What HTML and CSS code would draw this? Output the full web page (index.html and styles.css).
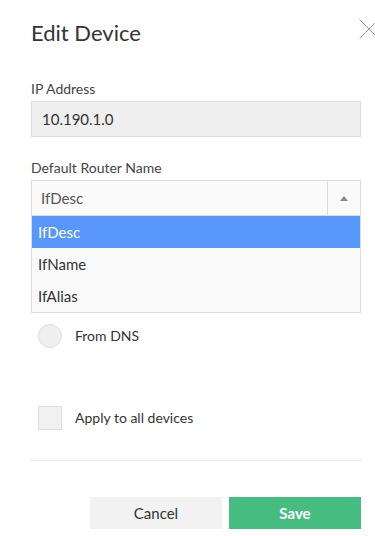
FILE: index.html
```html
<!DOCTYPE html>
<html lang="en">
<head>
  <meta name="viewport" content="width=device-width, initial-scale=1.0" />
  <title>Edit Device</title>
  <link rel="stylesheet" href="styles.css">
</head>
<body>

  <div class="modal">
    <h1 class="modal-title">Edit Device</h1>
    <span class="close-btn">
      <svg width="20" height="20" viewBox="0 0 20 20">
        <path d="M0.5 0.5 L19.5 19.5 M19.5 0.5 L0.5 19.5" stroke="#9a9a9a" stroke-width="1" fill="none" />
      </svg>
    </span>

    <div class="field first">
      <label>IP Address</label>
      <div class="input">10.190.1.0</div>
    </div>

    <div class="field">
      <label>Default Router Name</label>
      <div class="select">
        <span class="select-value">IfDesc</span>
        <span class="select-arrow"></span>
      </div>
      <ul class="dropdown">
        <li class="active">IfDesc</li>
        <li>IfName</li>
        <li>IfAlias</li>
      </ul>
    </div>

    <div class="option radio-row">
      <span class="radio"></span>
      <span>From DNS</span>
    </div>

    <div class="option check-row">
      <span class="checkbox"></span>
      <span>Apply to all devices</span>
    </div>

    <hr class="divider">

    <div class="actions">
      <button class="btn cancel">Cancel</button>
      <button class="btn save">Save</button>
    </div>
  </div>

</body>
</html>
```

FILE: styles.css
```css
body {
  margin: 0;
  font-family: Lato, "Open Sans", sans-serif;
  background: white;
  color: #333;
}

.modal {
  position: relative;
  width: 330px;
  padding: 20px 0 0 31px;
}

.modal-title {
  margin: 0;
  font-size: 22px;
  line-height: 26px;
  font-weight: normal;
  color: #333;
}

.close-btn {
  position: absolute;
  top: 19px;
  left: 359px;
  width: 20px;
  height: 20px;
  cursor: pointer;
}

.close-btn svg { display: block; }

.field {
  position: relative;
  margin-top: 22px;
}

.field.first { margin-top: 34px; }

.field label {
  display: block;
  font-size: 14px;
  line-height: 18px;
  margin-bottom: 3px;
  color: #444;
}

.input {
  height: 36px;
  box-sizing: border-box;
  border: 1px solid #dcdcdc;
  background: #efefef;
  padding: 0 10px;
  font-size: 15px;
  line-height: 34px;
  color: #333;
}

.select {
  display: flex;
  height: 36px;
  box-sizing: border-box;
  border: 1px solid #dcdcdc;
  background: #fafafa;
  font-size: 15px;
  line-height: 34px;
  color: #555;
}

.select-value {
  flex: 1;
  padding-left: 9px;
}

.select-arrow {
  width: 32px;
  border-left: 1px solid #dcdcdc;
  display: flex;
  align-items: center;
  justify-content: center;
}

.select-arrow::after {
  content: "";
  border-left: 4px solid transparent;
  border-right: 4px solid transparent;
  border-bottom: 5px solid #888;
}

.dropdown {
  position: absolute;
  left: 0;
  right: 0;
  top: 100%;
  margin: 0;
  padding: 0;
  list-style: none;
  background: #fafafa;
  border: 1px solid #dcdcdc;
  border-top: none;
  z-index: 2;
}

.dropdown li {
  height: 32px;
  line-height: 32px;
  padding-left: 6px;
  font-size: 15px;
  color: #333;
}

.dropdown li.active {
  background: #5897fb;
  color: white;
}

.option {
  display: flex;
  align-items: center;
  gap: 13px;
  padding-left: 7px;
  font-size: 14px;
  line-height: 24px;
  color: #333;
}

.radio-row { margin-top: 108px; }
.check-row { margin-top: 58px; }

.radio {
  width: 24px;
  height: 24px;
  box-sizing: border-box;
  border-radius: 50%;
  border: 1px solid #dedede;
  background: #efefef;
}

.checkbox {
  width: 24px;
  height: 24px;
  box-sizing: border-box;
  border: 1px solid #dedede;
  background: #f1f1f1;
}

.divider {
  border: none;
  border-top: 1px solid #ececec;
  margin: 30px 0 0;
}

.actions {
  display: flex;
  justify-content: flex-end;
  gap: 7px;
  margin-top: 36px;
}

.btn {
  width: 132px;
  height: 32px;
  border: none;
  font-family: Lato, "Open Sans", sans-serif;
  font-size: 15px;
  cursor: pointer;
}

.cancel {
  background: #f2f2f2;
  color: #333;
}

.save {
  background: #45bd80;
  color: white;
  font-weight: bold;
}
```
